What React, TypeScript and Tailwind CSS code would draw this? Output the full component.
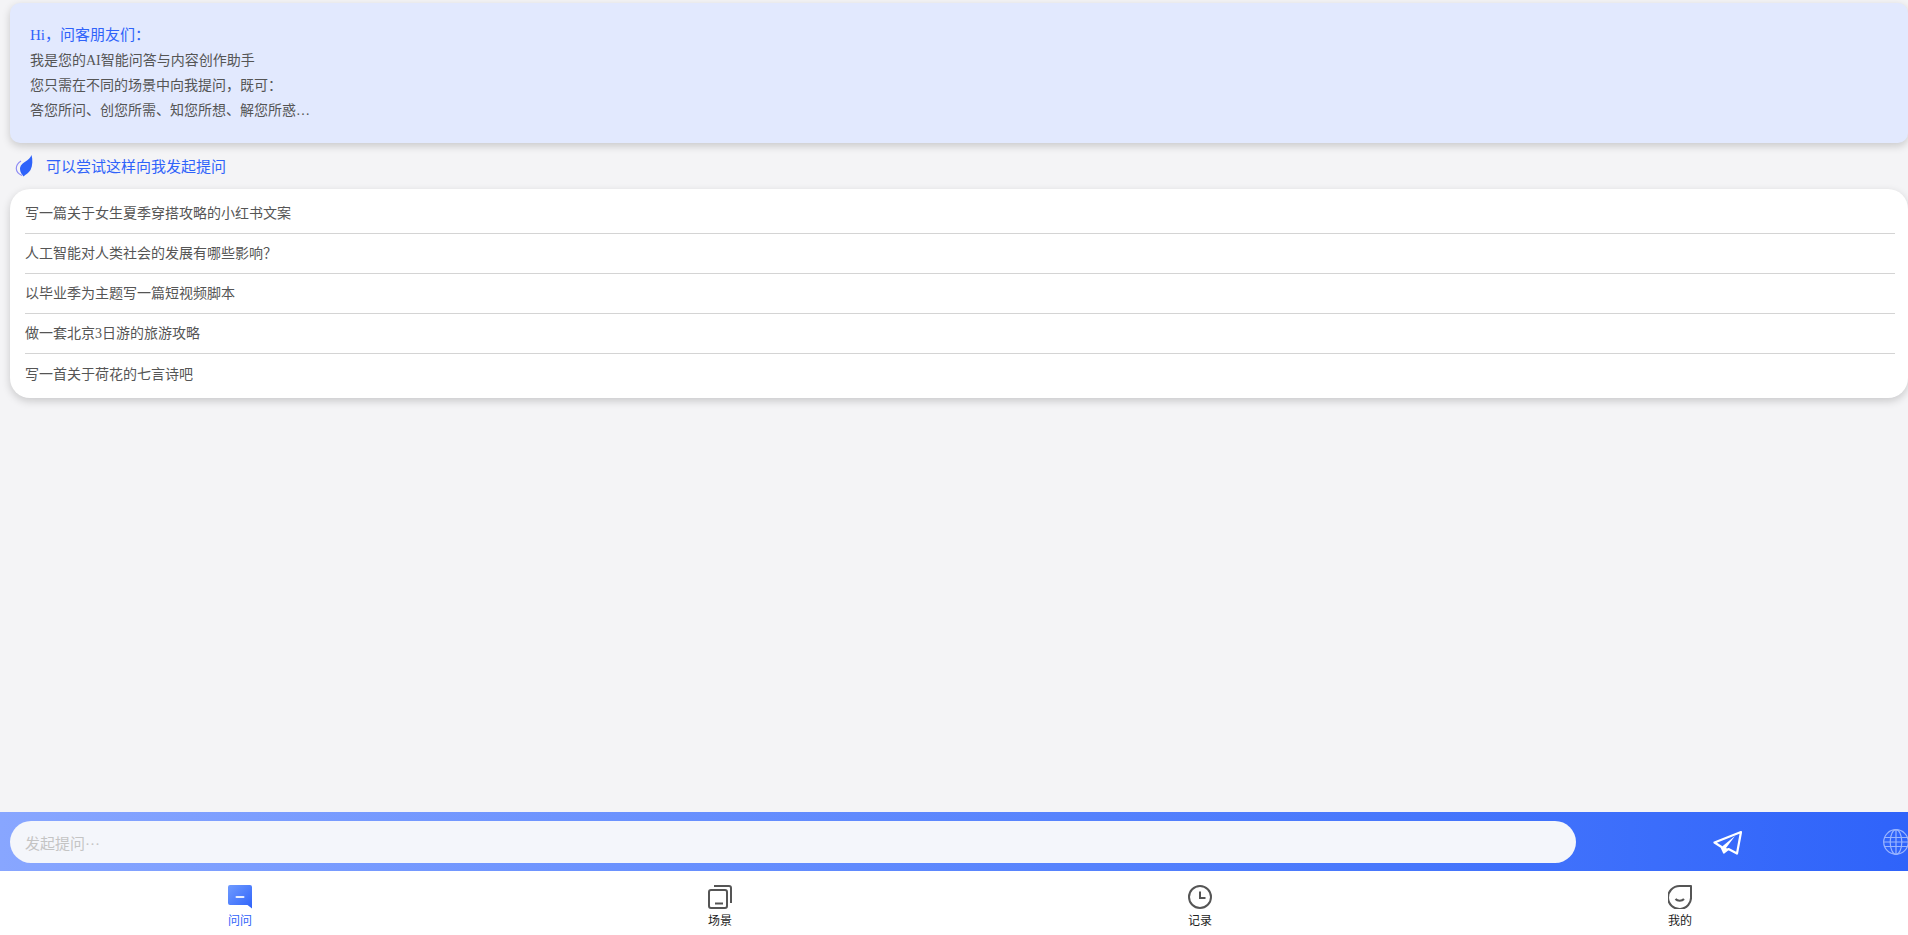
const prompts = [
  '写一篇关于女生夏季穿搭攻略的小红书文案',
  '人工智能对人类社会的发展有哪些影响？',
  '以毕业季为主题写一篇短视频脚本',
  '做一套北京3日游的旅游攻略',
  '写一首关于荷花的七言诗吧',
];

function LeafIcon() {
  return (
    <svg width="18" height="22" viewBox="0 0 18 22" fill="none">
      <path d="M6 6C3 8 1.200 10.500 1.300 13.500c.1 3 2.200 5.500 5.700 7" stroke="#8f8cf5" strokeWidth="1.200" />
      <path d="M16.500 0c1.300 4.500 1.300 10.500-1 15-1.800 3-5 4.500-7 6.500-1.500-2.500-3.500-4-3.500-7.500S7.500 8.500 10.500 6.500C13 5 15.500 3 16.500 0z" fill="#2f63fa" />
    </svg>
  );
}

function SendIcon() {
  return (
    <svg width="29" height="25" viewBox="0 0 29 25" fill="none">
      <path d="M8.500 17 22 6l-9 12 2.500 1-4.500 3.500z" fill="#fff" />
      <path d="M28 2 1.500 12.500l7 4.500 2.500 5.500 4.500-3.500 8.500 4.500z" stroke="#fff" strokeWidth="2.200" strokeLinejoin="round" />
    </svg>
  );
}

function GlobeIcon() {
  return (
    <svg width="26" height="26" viewBox="0 0 26 26" fill="none" stroke="#9ab5ff" strokeWidth="1.200" className="shrink-0">
      <circle cx="13" cy="13" r="12.300" />
      <ellipse cx="13" cy="13" rx="5.800" ry="12.300" />
      <path d="M13 .7v24.600M1.600 8.500h22.800M.7 13h24.600M1.600 17.500h22.800" />
    </svg>
  );
}

function AskIcon() {
  return (
    <svg width="24" height="24" viewBox="0 0 24 24">
      <defs>
        <linearGradient id="askFill" x1="0" y1="0" x2="1" y2="1">
          <stop offset="0" stopColor="#6f9bff" />
          <stop offset="1" stopColor="#2f63fa" />
        </linearGradient>
      </defs>
      <path d="M2 0h20a2 2 0 0 1 2 2v21.500L19.500 20H2a2 2 0 0 1-2-2V2a2 2 0 0 1 2-2z" fill="url(#askFill)" />
      <rect x="7.500" y="11" width="9" height="2" rx="1" fill="#e6edff" />
    </svg>
  );
}

function SceneIcon() {
  return (
    <svg width="24" height="24" viewBox="0 0 24 24" fill="none" stroke="#555" strokeWidth="2">
      <rect x="1" y="5" width="18" height="18" rx="2" />
      <path d="M6 1h15a2 2 0 0 1 2 2v15" />
      <path d="M7 18.500h8" />
    </svg>
  );
}

function HistoryIcon() {
  return (
    <svg width="24" height="24" viewBox="0 0 24 24" fill="none" stroke="#555" strokeWidth="2">
      <circle cx="12" cy="12" r="11" />
      <path d="M12 6.500V13h5.500" />
    </svg>
  );
}

function MineIcon() {
  return (
    <svg width="24" height="24" viewBox="0 0 24 24" fill="none" stroke="#555" strokeWidth="2">
      <path d="M23 1v10.500A11.500 11.500 0 1 1 11.500 1H23z" strokeLinejoin="round" />
      <path d="M7.500 14c2 2.400 6.500 2.400 8.500 0" />
    </svg>
  );
}

const tabs = [
  { label: '问问', icon: <AskIcon />, active: true },
  { label: '场景', icon: <SceneIcon /> },
  { label: '记录', icon: <HistoryIcon /> },
  { label: '我的', icon: <MineIcon /> },
];

export default function App() {
  return (
    <div className="flex h-screen w-screen flex-col overflow-hidden bg-[#f4f4f6] font-['Liberation_Serif','Noto_Sans_CJK_SC',serif]">
      <main className="flex-1 pt-[3px] pl-[10px]">
        {/* greeting */}
        <section className="h-[140px] rounded-[10px] bg-[#e2e9fe] px-5 py-[20px] text-sm leading-[25px] text-[#555] shadow-[0_3px_8px_rgba(0,0,0,0.18)]">
          <p className="text-[15px] text-[#2f63fa]">Hi，问客朋友们：</p>
          <p>我是您的AI智能问答与内容创作助手</p>
          <p>您只需在不同的场景中向我提问，既可：</p>
          <p>答您所问、创您所需、知您所想、解您所惑…</p>
        </section>

        <div className="flex h-[46px] items-center gap-[13px] pl-[5px] text-[15px] text-[#2f63fa]">
          <LeafIcon />
          <span className="pt-[2px]">可以尝试这样向我发起提问</span>
        </div>

        {/* suggested prompts */}
        <ul className="rounded-[20px] bg-white pt-[5px] pr-[13px] pb-[4px] pl-[15px] text-sm text-[#555] shadow-[0_3px_8px_rgba(0,0,0,0.18)]">
          {prompts.map((text, i) => (
            <li
              key={text}
              className={
                i < prompts.length - 1
                  ? 'flex h-10 items-center border-b border-[#d4d4d4] pt-px'
                  : 'flex h-10 items-center pt-px'
              }
            >
              {text}
            </li>
          ))}
        </ul>
      </main>

      {/* input bar */}
      <div className="flex h-[59px] shrink-0 items-start bg-gradient-to-r from-[#88a6ff] to-[#2f63fa] pt-[9px] pl-[10px]">
        <div className="flex h-[42px] w-[1566px] shrink-0 items-center rounded-[21px] bg-[#f4f6fb] pt-[4px] pl-[15px] text-[15px] text-[#c4c4c4]">
          发起提问···
        </div>
        <div className="flex h-[42px] w-[303px] shrink-0 items-center justify-center">
          <SendIcon />
        </div>
        <div className="ml-[4px] flex h-[42px] items-center">
          <GlobeIcon />
        </div>
      </div>

      {/* tab bar */}
      <nav className="grid h-[64px] w-[1920px] shrink-0 grid-cols-4 bg-white pt-[14px]">
        {tabs.map((tab) => (
          <div key={tab.label} className="flex flex-col items-center">
            {tab.icon}
            <span className={tab.active ? 'mt-[3px] text-xs leading-[18px] text-[#2f63fa]' : 'mt-[3px] text-xs leading-[18px] text-[#222]'}>
              {tab.label}
            </span>
          </div>
        ))}
      </nav>
    </div>
  );
}
